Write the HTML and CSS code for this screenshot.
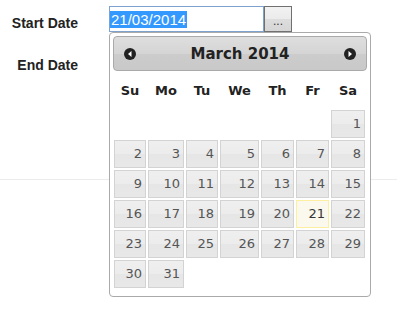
FILE: index.html
```html
<!DOCTYPE html>
<html lang="en">
<head>
    <meta charset="UTF-8">
    <title>Date Range</title>
    <link rel="stylesheet" href="styles.css">
</head>
<body>
    <div class="form">
        <div class="row">
            <label class="label">Start Date</label>
            <div class="field">
                <div class="date-input focused"><span class="selected">21/03/2014</span></div>
                <button class="pick">...</button>
            </div>
        </div>
        <div class="row">
            <label class="label">End Date</label>
            <div class="field">
                <!-- covered by the open calendar -->
                <div class="date-input"></div>
                <button class="pick" aria-label="Pick end date"></button>
            </div>
        </div>
        <div class="divider"></div>
    </div>

    <div class="datepicker">
        <div class="dp-header">
            <svg class="nav" width="12" height="12" viewBox="0 0 12 12">
                <circle cx="6" cy="6" r="6" fill="#222"/>
                <polygon points="4,6 7.5,3 7.5,9" fill="#fff"/>
            </svg>
            <div class="dp-title">March 2014</div>
            <svg class="nav" width="12" height="12" viewBox="0 0 12 12">
                <circle cx="6" cy="6" r="6" fill="#222"/>
                <polygon points="8,6 4.5,3 4.5,9" fill="#fff"/>
            </svg>
        </div>
        <div class="dp-names">
            <span>Su</span><span>Mo</span><span>Tu</span><span>We</span><span>Th</span><span>Fr</span><span>Sa</span>
        </div>
        <div class="dp-days">
            <a class="day first">1</a>
            <a class="day">2</a><a class="day">3</a><a class="day">4</a><a class="day">5</a><a class="day">6</a><a class="day">7</a><a class="day">8</a>
            <a class="day">9</a><a class="day">10</a><a class="day">11</a><a class="day">12</a><a class="day">13</a><a class="day">14</a><a class="day">15</a>
            <a class="day">16</a><a class="day">17</a><a class="day">18</a><a class="day">19</a><a class="day">20</a><a class="day today">21</a><a class="day">22</a>
            <a class="day">23</a><a class="day">24</a><a class="day">25</a><a class="day">26</a><a class="day">27</a><a class="day">28</a><a class="day">29</a>
            <a class="day">30</a><a class="day">31</a>
        </div>
    </div>
</body>
</html>
```

FILE: styles.css
```css
body {
    font-family: 'Liberation Sans', Arial, sans-serif;
    background-color: #fff;
    color: #222;
    margin: 0;
    padding: 0;
}
.form {
    padding-top: 6px;
}
.row {
    display: flex;
    height: 42px;
}
.label {
    width: 78px;
    text-align: right;
    font-weight: bold;
    font-size: 14px;
    line-height: 16px;
    padding-top: 9px;
    box-sizing: border-box;
}
.field {
    margin-left: 31px;
    display: flex;
    align-items: flex-start;
}
.date-input {
    width: 155px;
    height: 26px;
    box-sizing: border-box;
    border: 1px solid #abadb3;
    background-color: #fff;
    font-size: 15px;
    line-height: 17px;
    padding: 4px 0 0 0;
    white-space: nowrap;
}
.date-input.focused {
    border-color: #7da2ce;
}
.selected {
    background-color: #3399ff;
    color: #fff;
    padding: 0 1px 0 1px;
}
.pick {
    width: 28px;
    height: 26px;
    box-sizing: border-box;
    border: 1px solid #707070;
    background: linear-gradient(#f2f2f2, #ebebeb 50%, #dddddd 51%, #d6d6d6);
    font-family: 'Liberation Sans', Arial, sans-serif;
    font-size: 12px;
    color: #333;
    padding: 4px 0 0;
    margin: 0;
}
.divider {
    margin-top: 89px;
    border-top: 1px solid #ebebeb;
}

/* calendar popup */
.datepicker {
    position: absolute;
    top: 32px;
    left: 109px;
    width: 262px;
    box-sizing: border-box;
    padding: 3px 3px 8px;
    border: 1px solid #aaa;
    border-radius: 4px;
    background-color: #fff;
    font-family: 'DejaVu Sans', Verdana, sans-serif;
    color: #222;
}
.dp-header {
    height: 35px;
    box-sizing: border-box;
    border: 1px solid #aaa;
    border-radius: 4px;
    background: linear-gradient(#dedede, #d5d5d5 50%, #cccccc 51%, #c9c9c9);
    display: flex;
    align-items: center;
    padding: 0 10px;
}
.nav {
    flex: none;
}
.dp-title {
    flex: 1;
    text-align: center;
    font-weight: bold;
    font-size: 15px;
}
.dp-names,
.dp-days {
    display: grid;
    grid-template-columns: 32px 36px 32px 39px 33px 33px 34px;
    column-gap: 2px;
    padding: 0 1px;
}
.dp-names {
    height: 39px;
    align-items: center;
    text-align: center;
    font-weight: bold;
    font-size: 13px;
}
.dp-days {
    row-gap: 2px;
    grid-auto-rows: 28px;
}
.day {
    display: block;
    box-sizing: border-box;
    border: 1px solid #d3d3d3;
    background: linear-gradient(#efefef, #ececec 50%, #e6e6e6 51%, #e8e8e8);
    color: #555;
    font-size: 13px;
    line-height: 26px;
    text-align: right;
    padding: 0 3px;
    text-decoration: none;
    cursor: pointer;
}
.day.first {
    grid-column-start: 7;
}
.day.today {
    border-color: #fcefa1;
    background: #fbf9ee;
    color: #363636;
}
```
